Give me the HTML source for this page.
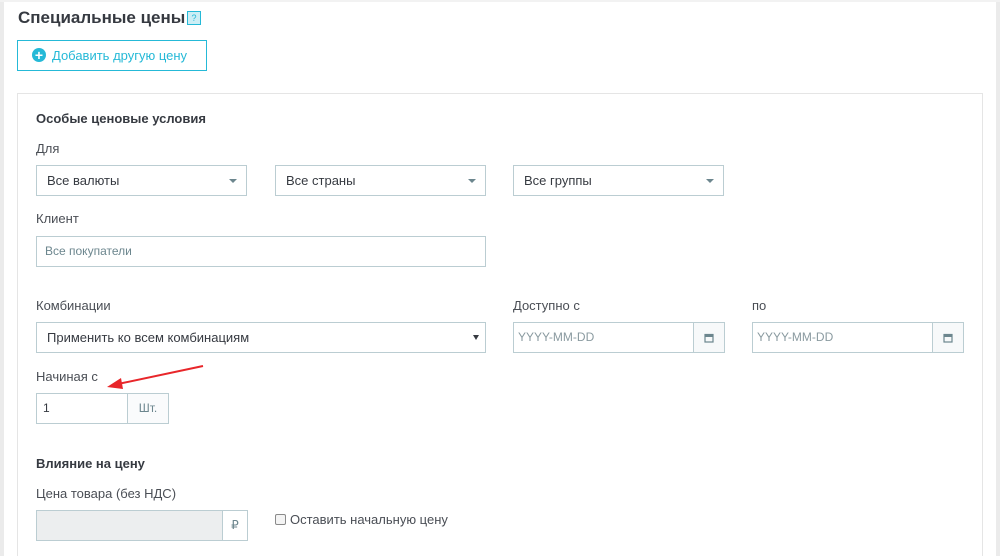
<!DOCTYPE html>
<html><head><meta charset="utf-8"><style>
*{box-sizing:border-box;margin:0;padding:0}
html{height:556px;overflow:hidden}
body{width:1000px;height:556px;overflow:hidden;background:#fff;font-family:"Liberation Sans","DejaVu Sans",sans-serif;color:#363a41;font-size:13px;position:relative}
.a{position:absolute}
.lbl{position:absolute;font-size:13px;color:#4a4e55;line-height:16px}
.b{font-weight:bold;color:#363a41}
.box{position:absolute;border:1px solid #bbcdd2;background:#fff;height:31px;font-size:13px;line-height:29px;padding-left:10px}
.caret{position:absolute;right:9px;top:13px;width:0;height:0;border-left:4px solid transparent;border-right:4px solid transparent;border-top:4px solid #6c868e}
.addon{position:absolute;top:-1px;height:31px;border:1px solid #bbcdd2;background:#f7f9fa;text-align:center;line-height:29px;color:#6c868e}
</style></head><body>
<div class="a" style="left:0;top:0;width:4px;height:556px;background:#ebebeb"></div>
<div class="a" style="right:0;top:0;width:4px;height:556px;background:#ebebeb"></div>
<div class="a" style="left:0;top:0;width:1000px;height:2px;background:#f2f2f2"></div>

<div class="a b" style="left:18px;top:7px;font-size:17px;line-height:22px">Специальные цены</div>
<div class="a" style="left:187px;top:11px;width:14px;height:14px;border:1px solid #25b9d7;background:#cdeef5;color:#25b9d7;font-size:9px;line-height:12px;text-align:center">?</div>

<div class="a" style="left:17px;top:40px;width:190px;height:31px;border:1px solid #25b9d7;color:#25b9d7;font-size:13px;line-height:29px;padding-left:34px">Добавить другую цену</div>
<div class="a" style="left:32px;top:48px;width:14px;height:14px;border-radius:50%;background:#25b9d7;color:#fff;font-size:14px;font-weight:bold;line-height:14px;text-align:center">+</div>

<div class="a" style="left:17px;top:93px;width:966px;height:470px;border:1px solid #e5e5e5"></div>

<div class="lbl b" style="left:36px;top:111px">Особые ценовые условия</div>
<div class="lbl" style="left:36px;top:141px">Для</div>
<div class="box" style="left:36px;top:165px;width:211px">Все валюты<span class="caret"></span></div>
<div class="box" style="left:275px;top:165px;width:211px">Все страны<span class="caret"></span></div>
<div class="box" style="left:513px;top:165px;width:211px">Все группы<span class="caret"></span></div>

<div class="lbl" style="left:36px;top:211px">Клиент</div>
<div class="box" style="left:36px;top:236px;width:450px;color:#6c868e;padding-left:8px;font-size:12px">Все покупатели</div>

<div class="lbl" style="left:36px;top:298px">Комбинации</div>
<div class="lbl" style="left:513px;top:298px">Доступно с</div>
<div class="lbl" style="left:752px;top:298px">по</div>
<div class="box" style="left:36px;top:322px;width:450px">Применить ко всем комбинациям<span class="caret" style="border-top-color:#363a41;border-top-width:5px;border-left-width:3px;border-right-width:3px;right:6px;top:12px"></span></div>
<div class="box" style="left:513px;top:322px;width:211px;color:#8a9aa0;padding-left:4px;font-size:12px">YYYY-MM-DD<div class="addon" style="left:179px;width:32px"><svg width="10" height="10" viewBox="0 0 10 10" style="margin-top:10px"><rect x="1" y="1.5" width="8" height="7.5" fill="none" stroke="#6c868e" stroke-width="1.2"/><rect x="1" y="1.5" width="8" height="2.5" fill="#6c868e"/></svg></div></div>
<div class="box" style="left:752px;top:322px;width:211px;color:#8a9aa0;padding-left:4px;font-size:12px">YYYY-MM-DD<div class="addon" style="left:179px;width:32px"><svg width="10" height="10" viewBox="0 0 10 10" style="margin-top:10px"><rect x="1" y="1.5" width="8" height="7.5" fill="none" stroke="#6c868e" stroke-width="1.2"/><rect x="1" y="1.5" width="8" height="2.5" fill="#6c868e"/></svg></div></div>

<div class="lbl" style="left:36px;top:369px">Начиная с</div>
<div class="box" style="left:36px;top:393px;width:132px;padding-left:6px;font-size:12px">1<div class="addon" style="left:90px;width:42px;background:#fafbfc;font-size:12px">Шт.</div></div>

<svg class="a" style="left:0;top:0" width="1000" height="556"><line x1="203" y1="366" x2="118" y2="384" stroke="#e8262a" stroke-width="2"/><polygon points="107,387 121,378 123,389" fill="#e8262a"/></svg>

<div class="lbl b" style="left:36px;top:456px">Влияние на цену</div>
<div class="lbl" style="left:36px;top:486px">Цена товара (без НДС)</div>
<div class="box" style="left:36px;top:510px;width:211px;background:#eceeef">&nbsp;<div class="addon" style="left:185px;width:26px;background:#fff;font-size:12px">₽</div></div>
<div class="a" style="left:275px;top:514px;width:11px;height:11px;border:1px solid #8a8a8a;border-radius:2px;background:#f4f4f4"></div>
<div class="lbl" style="left:290px;top:512px">Оставить начальную цену</div>
</body></html>
